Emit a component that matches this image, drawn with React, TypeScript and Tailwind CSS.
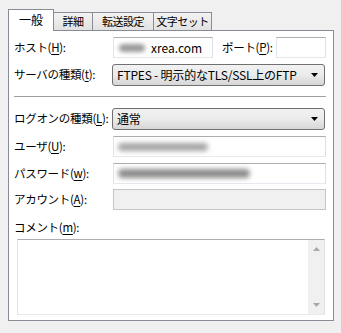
import type { ReactNode } from "react";

const font = "font-['Noto_Sans_CJK_JP','Noto_Sans',sans-serif]";

function Label({ children, className = "" }: { children: ReactNode; className?: string }) {
  return (
    <div className={`flex shrink-0 items-center whitespace-nowrap text-[11.5px] tracking-[-0.3px] leading-none ${className}`}>
      <span className="whitespace-nowrap">{children}</span>
    </div>
  );
}

function Key({ k }: { k: string }) {
  return (
    <>
      (<span className="underline underline-offset-2">{k}</span>):
    </>
  );
}

function TextBox({ className = "", children }: { className?: string; children?: ReactNode }) {
  return (
    <div
      className={`relative flex h-[21px] shrink-0 items-center overflow-hidden border border-[#abadb3] border-r-[#dbdfe6] border-b-[#e3e9ef] border-l-[#e2e3ea] bg-white px-[4px] text-[12px] leading-none ${className}`}
    >
      {children}
    </div>
  );
}

function Combo({ text }: { text: string }) {
  return (
    <div className="-ml-px flex h-[22px] w-[213px] shrink-0 items-center justify-between whitespace-nowrap rounded-[3px] border border-[#707070] bg-gradient-to-b from-[#f2f2f2] via-[#ebebeb] to-[#d6d6d6] pl-[4px] pr-[5px] text-[12px] tracking-[-0.2px] leading-none">
      <span>{text}</span>
      <svg width="8" height="5" viewBox="0 0 8 5">
        <path d="M0 0 H7 L3.5 4 Z" fill="#000" />
      </svg>
    </div>
  );
}

function Tab({ label, active = false, w }: { label: string; active?: boolean; w: string }) {
  if (active) {
    return (
      <div
        className={`relative z-10 -mb-px flex h-[22px] ${w} shrink-0 items-start justify-center whitespace-nowrap border border-b-0 border-[#898c95] bg-white pt-[3px] text-[12px] leading-[14px]`}
      >
        {label}
      </div>
    );
  }
  return (
    <div
      className={`-ml-px flex h-[18px] ${w} shrink-0 items-center justify-center whitespace-nowrap border border-b-0 border-[#898c95] bg-gradient-to-b from-[#f3f3f3] to-[#e2e2e2] text-[11px] tracking-[-0.5px] leading-none`}
    >
      {label}
    </div>
  );
}

export default function App() {
  return (
    <div className={`h-[333px] w-[341px] bg-[#f0f0f0] pl-[8px] pt-[9px] text-black ${font}`}>
      <div className="flex h-[21px] items-end">
        <Tab label="一般" active w="w-[46px]" />
        <Tab label="詳細" w="w-[40px]" />
        <Tab label="転送設定" w="w-[62px]" />
        <Tab label="文字セット" w="w-[59px]" />
      </div>

      <div className="h-[291px] w-[326px] border border-[#898c95] bg-white pl-[5px] pt-[6px]">
        <div className="flex">
          <Label className="h-[21px] w-[99px]">
            ホスト<Key k="H" />
          </Label>
          <TextBox className="w-[100px]">
            <div className="ml-[1px] h-[8px] w-[26px] rounded-full bg-[#9a9a9a] blur-[2px]" />
            <span className="ml-[6px]">xrea.com</span>
          </TextBox>
          <Label className="ml-[9px] h-[21px] w-[54px]">
            ポート<Key k="P" />
          </Label>
          <TextBox className="w-[50px]" />
        </div>

        <div className="mt-[6px] flex">
          <Label className="h-[22px] w-[99px]">
            サーバの種類<Key k="t" />
          </Label>
          <Combo text="FTPES - 明示的なTLS/SSL上のFTP" />
        </div>

        <div className="mt-[10px] h-[2px] w-[312px] border-t border-b border-t-[#a0a0a0] border-b-white" />

        <div className="mt-[10px] flex">
          <Label className="h-[22px] w-[99px]">
            ログオンの種類<Key k="L" />
          </Label>
          <Combo text="通常" />
        </div>

        <div className="mt-[6px] flex">
          <Label className="h-[21px] w-[99px]">
            ユーザ<Key k="U" />
          </Label>
          <TextBox className="w-[213px]">
            <div className="h-[8px] w-[90px] rounded-full bg-[#a5a5a5] blur-[2.5px]" />
          </TextBox>
        </div>

        <div className="mt-[6px] flex">
          <Label className="h-[21px] w-[99px]">
            パスワード<Key k="w" />
          </Label>
          <TextBox className="w-[213px]">
            <div className="h-[9px] w-[132px] rounded-full bg-[#8c8c8c] blur-[2.5px]" />
          </TextBox>
        </div>

        <div className="mt-[5px] flex">
          <Label className="h-[21px] w-[99px]">
            アカウント<Key k="A" />
          </Label>
          <TextBox className="w-[213px] !border-[#c5c5c5] !bg-[#f0f0f0]" />
        </div>

        <Label className="mt-[7px] h-[22px]">
          コメント<Key k="m" />
        </Label>

        <div className="ml-[3px] flex h-[76px] w-[308px] border border-[#abadb3] border-b-[#e3e9ef] border-l-[#e2e3ea] border-r-[#dbdfe6] bg-white">
          <div className="flex-1" />
          <div className="flex w-[16px] flex-col items-center justify-between bg-[#f0f0f0] py-[7px]">
            <svg width="7" height="4" viewBox="0 0 7 4">
              <path d="M0 4 L3.5 0 L7 4 Z" fill="#a8a8a8" />
            </svg>
            <svg width="7" height="4" viewBox="0 0 7 4">
              <path d="M0 0 L3.5 4 L7 0 Z" fill="#a8a8a8" />
            </svg>
          </div>
        </div>
      </div>
    </div>
  );
}
